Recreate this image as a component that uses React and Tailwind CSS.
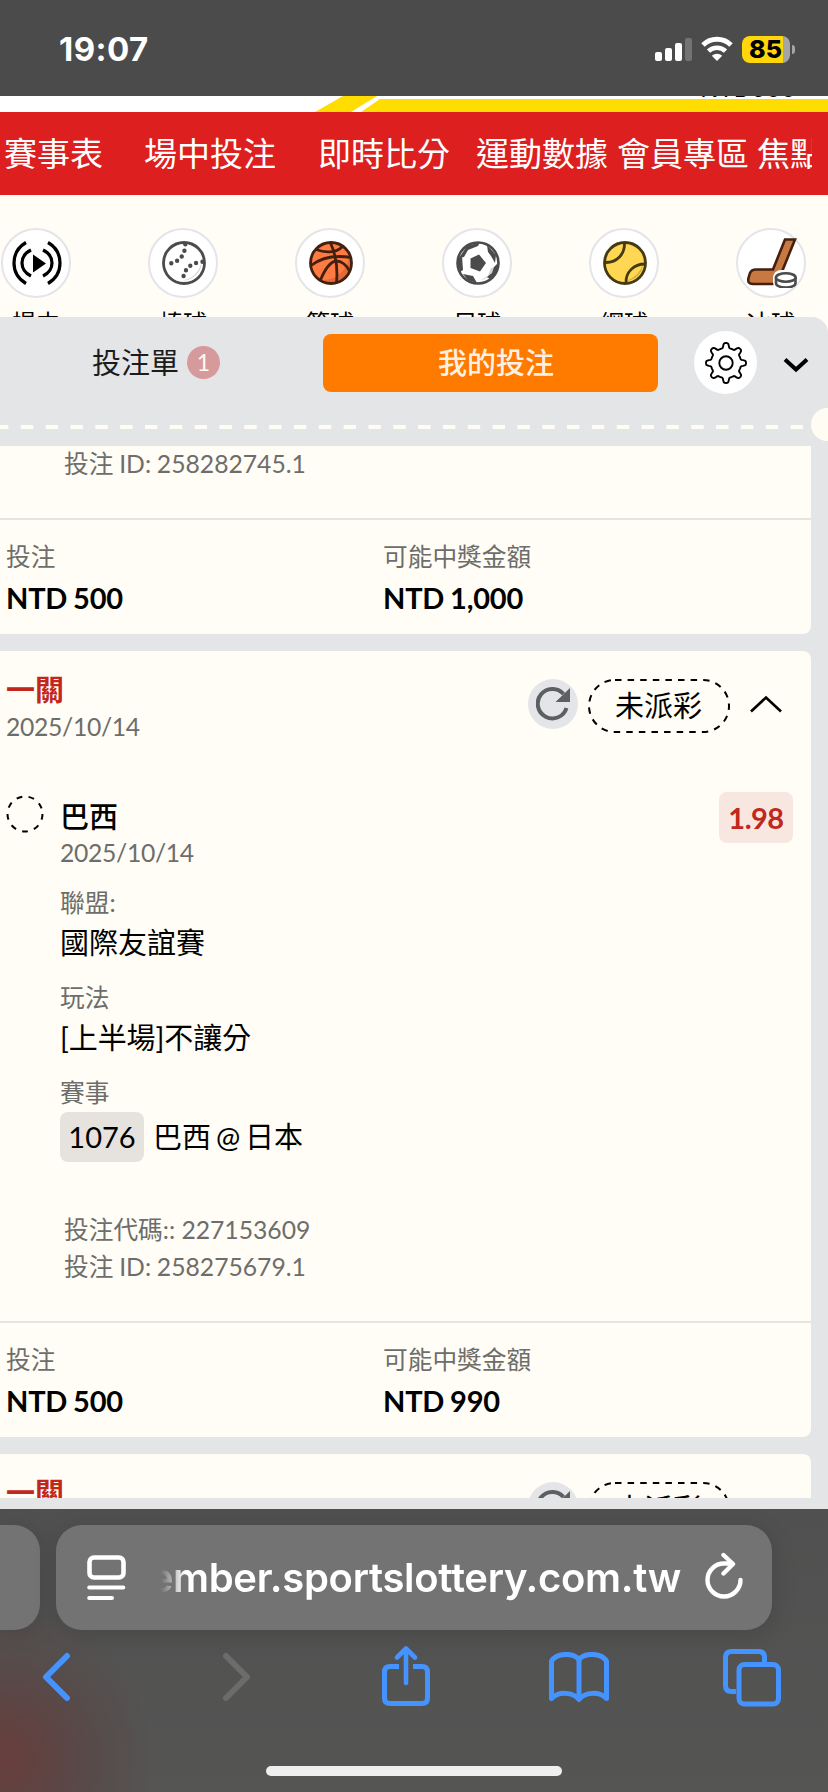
const navItems = [
  { label: "賽事表", space: "mr-[41px]" },
  { label: "場中投注", space: "mr-[42px]" },
  { label: "即時比分", space: "mr-[26px]" },
  { label: "運動數據", space: "mr-[9px]" },
  { label: "會員專區", space: "mr-[8px]" },
  { label: "焦點賽事", space: "" },
];

function StatusBar() {
  return (
    <div className="flex h-24 shrink-0 items-start justify-between bg-[#4b4b4b] pl-[59px] pr-[33px] font-['Inter',sans-serif]">
      <span className="mt-[29px] text-[33px] font-bold leading-[40px] tracking-[0.4px] text-white">
        19:07
      </span>
      <div className="mt-9 flex items-start">
        <svg width="38" height="24" viewBox="0 0 38 24" className="mt-[2px]" fill="#fff">
          <rect x="0" y="14" width="7" height="9" rx="2" />
          <rect x="10" y="10" width="7" height="13" rx="2" />
          <rect x="20" y="5" width="7" height="18" rx="2" />
          <rect x="30" y="0" width="7" height="23" rx="2" fill="#737373" />
        </svg>
        <svg width="32" height="25" viewBox="0 0 32 25" className="ml-[8px]" fill="none">
          <path d="M2 9a20 20 0 0 1 28 0" stroke="#fff" strokeWidth="5" />
          <path d="M7.5 15.2a12.3 12.3 0 0 1 17 0" stroke="#fff" strokeWidth="4.6" />
          <path d="M16 25l-5.2-5.2a7.4 7.4 0 0 1 10.4 0z" fill="#fff" />
        </svg>
        <div className="ml-[9px] flex h-[27px] w-12 items-center justify-center rounded-[8px] bg-[linear-gradient(90deg,#ffd60a_41px,#a5a5a5_41px)] pr-[1px] text-[25px] font-extrabold leading-none text-black">
          85
        </div>
        <div className="ml-[2px] mt-[9px] h-[9px] w-[3px] rounded-r-full bg-[#a5a5a5]" />
      </div>
    </div>
  );
}

function SiteHeader() {
  return (
    <div className="relative h-4 shrink-0 overflow-hidden bg-white">
      <svg width="828" height="16" viewBox="0 0 828 16" fill="#ffdd00">
        <path d="M315 16L343 0H377L351 16z" />
        <path d="M361 16L380 3H828V16z" />
      </svg>
      <span className="absolute right-[32px] top-[-21px] text-[24px] leading-[28px] text-black font-['Inter',sans-serif]">
        NTD500
      </span>
    </div>
  );
}

function LiveIcon() {
  return (
    <svg width="50" height="44" viewBox="0 0 50 44" fill="none" stroke="#000" strokeWidth="3.2">
      <path d="M14 1.5C-2 11 -2 33 14 42.5" />
      <path d="M19 9C7 15 7 29 19 35" />
      <path d="M31 9C43 15 43 29 31 35" />
      <path d="M36 1.5C52 11 52 33 36 42.5" />
      <path d="M21 13.5V31.5L34 22.5z" fill="#000" stroke="none" />
    </svg>
  );
}

function BaseballIcon() {
  return (
    <svg width="44" height="44" viewBox="0 0 44 44" fill="none">
      <circle cx="22" cy="22" r="20.5" fill="#fff" />
      <path d="M39.5 20A22 22 0 0 1 20 39.5A18.5 18.5 0 0 0 39.5 20z" fill="#d4d4d4" />
      <circle cx="22" cy="22" r="20.5" stroke="#4b4b4b" strokeWidth="2.8" />
      <g stroke="#4b4b4b" strokeWidth="4.4" strokeLinecap="round">
        <path d="M23.3 3.3C23 16 16 22 3.3 23.3" strokeDasharray="0 6.4" />
        <path d="M40.5 20.8C28 22 21.5 28 20.8 40.5" strokeDasharray="0 6.4" />
      </g>
    </svg>
  );
}

function BasketballIcon() {
  return (
    <svg width="44" height="44" viewBox="0 0 44 44" fill="none" stroke="#43200f" strokeWidth="2.8">
      <circle cx="22" cy="22" r="20.5" fill="#ff7b42" stroke="none" />
      <path d="M40 15A26 26 0 0 1 14 39A18 18 0 0 0 40 15z" fill="#e56a35" stroke="none" />
      <circle cx="22" cy="22" r="20.5" />
      <path d="M21.5 2C27 14 29 27 27.5 42" />
      <path d="M7 8.5C16 12 27 12 33 6" />
      <path d="M2 24.5C13 16 27 14 42 16.5" />
      <path d="M11.5 39C16 28 21 21 27 20C33 20 38 25 40.5 30" />
    </svg>
  );
}

function SoccerIcon() {
  return (
    <svg width="44" height="44" viewBox="0 0 44 44" fill="none">
      <circle cx="22" cy="22" r="20.5" fill="#fff" stroke="#4b4b4b" strokeWidth="2.6" />
      <path d="M25 39C32 38 37 33 39 26L35 27L32 35z" fill="#d4d4d4" />
      <path d="M14.5 17.5L23 13.5L30 22L24 30.5L14.5 27z" fill="#4b4b4b" />
      <path d="M11 5L24 1L22 5L12 9L8 16L3 17zM31 4L40 14L39 22L35 15L32 11zM1 18L6 15L7 29L4 31zM7 33L17 35L21 42L12 39zM42 22L41 31L34 38L31 36L36 32L38 26z" fill="#4b4b4b" />
    </svg>
  );
}

function TennisIcon() {
  return (
    <svg width="44" height="44" viewBox="0 0 44 44" fill="none" stroke="#453a12" strokeWidth="2.8">
      <circle cx="22" cy="22" r="20.5" fill="#ffd752" stroke="none" />
      <path d="M40 23A25 25 0 0 1 22 40A18 18 0 0 0 40 23z" fill="#cdab3c" stroke="none" />
      <circle cx="22" cy="22" r="20.5" />
      <path d="M21.5 2C22 13 14 22 2 21.5" />
      <path d="M42 23C31 23 22.5 31 23 42" />
    </svg>
  );
}

function HockeyIcon() {
  return (
    <svg width="50" height="50" viewBox="0 0 50 50" fill="none" strokeWidth="2.6">
      <path
        d="M38 1.500H48L32 41Q30 46 25 46H6Q0 46 1.500 40L3 35Q4.500 31.500 9 31.500H26z"
        fill="#c87941"
        stroke="#43200f"
      />
      <rect x="26" y="32" width="23" height="20" rx="8" fill="#fff" />
      <path d="M29 39V45C29 51 48.5 51 48.5 45V39" stroke="#4b4b4b" fill="#fff" />
      <ellipse cx="38.8" cy="39.5" rx="9.8" ry="4.2" stroke="#4b4b4b" fill="#fff" />
    </svg>
  );
}

const sports = [
  { label: "場中", icon: <LiveIcon /> },
  { label: "棒球", icon: <BaseballIcon /> },
  { label: "籃球", icon: <BasketballIcon /> },
  { label: "足球", icon: <SoccerIcon /> },
  { label: "網球", icon: <TennisIcon /> },
  { label: "冰球", icon: <HockeyIcon /> },
];

function SportsRow() {
  return (
    <div className="flex h-[122px] shrink-0 gap-[77px] overflow-hidden pl-[1px] pt-[33px]">
      {sports.map((sport) => (
        <div key={sport.label} className="flex w-[70px] shrink-0 flex-col items-center">
          <div className="flex h-[70px] w-[70px] shrink-0 items-center justify-center rounded-full border-2 border-[#e4e5e9] bg-white pl-[2px]">
            {sport.icon}
          </div>
          <span className="mt-[7px] whitespace-nowrap text-[24px] leading-[36px] text-black">
            {sport.label}
          </span>
        </div>
      ))}
    </div>
  );
}

function GearIcon() {
  // eight rounded teeth around the hub
  const points = [];
  for (let i = 0; i < 192; i++) {
    const angle = (i / 192) * Math.PI * 2;
    const wave = Math.cos(angle * 8);
    const r = 17.6 + 2.5 * Math.tanh((wave - 0.3) * 2.6);
    points.push(`${(21 + r * Math.cos(angle)).toFixed(2)},${(21 + r * Math.sin(angle)).toFixed(2)}`);
  }
  return (
    <svg width="42" height="42" viewBox="0 0 42 42" fill="none" stroke="#000" strokeWidth="1.9">
      <polygon points={points.join(" ")} strokeLinejoin="round" />
      <circle cx="21" cy="21" r="6.7" />
    </svg>
  );
}

function BetTabs() {
  return (
    <div className="flex h-[91px] items-center">
      <div className="flex w-[323px] items-center pl-[92px]">
        <span className="text-[29px] leading-[36px] text-[#1c1c1c]">投注單</span>
        <span className="ml-[8px] flex h-[33px] w-[33px] items-center justify-center rounded-full bg-[#d69a9d] text-[23px] leading-none text-[#fffaf0]">
          1
        </span>
      </div>
      <button className="h-[58px] w-[335px] rounded-[8px] bg-[#ff7b00] pl-[11px] text-[29px] font-medium leading-[36px] text-[#fff0e4]">
        我的投注
      </button>
      <div className="ml-[36px] flex h-[63px] w-[63px] items-center justify-center rounded-full bg-white pl-[1px]">
        <GearIcon />
      </div>
      <svg width="26" height="16" viewBox="0 0 26 16" className="ml-[26px] mt-[4px]" fill="none">
        <path d="M2 2.5L13 12.5L24 2.5" stroke="#000" strokeWidth="4" />
      </svg>
    </div>
  );
}

function TicketEdge() {
  return (
    <div className="relative h-[38px] overflow-hidden">
      <svg width="808" height="4" viewBox="0 0 808 4" className="mt-[17px]">
        <path d="M-4 2H808" stroke="#fffdf3" strokeWidth="4" strokeDasharray="12.4 12.43" />
      </svg>
      <div className="absolute right-[-17px] top-0 h-[33px] w-[34px] rounded-full bg-[#fffdf3]" />
    </div>
  );
}

function ResendIcon() {
  return (
    <div className="flex h-[50px] w-[50px] items-center justify-center rounded-full bg-[#e4e5e9]">
      <svg width="34" height="34" viewBox="0 0 34 34" fill="none">
        <path d="M30.5 21A14.7 14.7 0 1 1 27.5 7" stroke="#5e5f61" strokeWidth="4" />
        <path d="M34 1V15H19.5z" fill="#5e5f61" />
      </svg>
    </div>
  );
}

function TicketHeader() {
  return (
    <div className="flex shrink-0 justify-between">
      <div className="flex flex-col pl-[6px] pt-[21px]">
        <span className="mb-[1px] text-[29px] font-bold leading-[36px] text-[#c1271b]">一關</span>
        <span className="text-[24.7px] leading-[36px] tracking-[-0.3px] text-[#6d6d6b]">2025/10/14</span>
      </div>
      <div className="flex items-start pr-[28px] pt-[28px]">
        <ResendIcon />
        <div className="relative ml-[10px] flex h-[54px] w-[142px] items-center justify-center pr-[1px] text-[29px] leading-[36px] text-black">
          <svg width="142" height="54" viewBox="0 0 142 54" className="absolute inset-0" fill="none">
            <rect
              x="1"
              y="1"
              width="140"
              height="52"
              rx="26"
              stroke="#000"
              strokeWidth="2"
              strokeDasharray="6.5 6.1"
            />
          </svg>
          未派彩
        </div>
        <svg width="34" height="18" viewBox="0 0 34 18" className="ml-[19px] mt-[16px]" fill="none">
          <path d="M2 16.5L17 2.5L32 16.5" stroke="#000" strokeWidth="2.6" />
        </svg>
      </div>
    </div>
  );
}

function TicketFooter({ stake, payout }) {
  return (
    <div className="grid grid-cols-[377px_1fr] border-t-2 border-[#e7e3de] pb-[11px] pl-[6px] pt-[19px]">
      <span className="text-[24.7px] leading-[36px] text-[#6d6d6b]">投注</span>
      <span className="text-[24.7px] leading-[36px] text-[#6d6d6b]">可能中獎金額</span>
      <span className="text-[29px] font-bold leading-[46px] tracking-[-0.2px] text-black [word-spacing:-1px]">{stake}</span>
      <span className="text-[29px] font-bold leading-[46px] tracking-[-0.2px] text-black [word-spacing:-1px]">{payout}</span>
    </div>
  );
}

function Field({ label, children }) {
  return (
    <div className="flex flex-col">
      <span className="text-[24.7px] leading-[36px] text-[#6d6d6b]">{label}</span>
      {children}
    </div>
  );
}

function Selection() {
  return (
    <div className="flex pt-[54px]">
      <svg width="38" height="38" viewBox="0 0 38 38" className="ml-[6px] mt-[-4px] shrink-0" fill="none">
        <circle cx="19" cy="19" r="17.5" stroke="#000" strokeWidth="2" strokeDasharray="5.8 6.42" />
      </svg>
      <div className="ml-[16px] flex flex-1 flex-col">
        <span className="text-[29px] font-medium leading-[36px] text-black">巴西</span>
        <span className="text-[24.7px] leading-[36px] tracking-[-0.3px] text-[#6d6d6b]">2025/10/14</span>
        <div className="mt-[14px] flex flex-col gap-[15px]">
          <Field label="聯盟:">
            <span className="text-[29px] leading-[44px] text-black">國際友誼賽</span>
          </Field>
          <Field label="玩法">
            <span className="text-[29px] leading-[44px] tracking-[-0.1px] text-black">[上半場]不讓分</span>
          </Field>
          <Field label="賽事">
            <div className="mt-[1px] flex items-center text-[29px] leading-[50px] text-black">
              <span className="h-[50px] w-[84px] rounded-[8px] bg-[#e6e3de] text-center">1076</span>
              <span className="ml-[9px] [word-spacing:-2.5px]">巴西 @ 日本</span>
            </div>
          </Field>
        </div>
        <div className="mb-[36px] mt-[49px] flex flex-col pl-[4px] text-[24.7px] leading-[37px] text-[#6d6d6b]">
          <span>投注代碼:: 227153609</span>
          <span className="[word-spacing:-0.5px]">投注 ID: 258275679.1</span>
        </div>
      </div>
      <span className="mr-[18px] mt-[-7px] flex h-[51px] w-[74px] items-center justify-center rounded-[8px] bg-[#f8e6e0] text-[29px] font-bold tracking-[-0.5px] text-[#c1271b]">
        1.98
      </span>
    </div>
  );
}

function BetPanel() {
  return (
    <div className="flex h-[1192px] shrink-0 flex-col rounded-tr-[16px] bg-[#e4e5e7]">
      <BetTabs />
      <TicketEdge />
      <div className="flex h-[1052px] w-[811px] flex-col gap-[17px] overflow-hidden">
        <div className="h-[188px] shrink-0 rounded-br-[8px] bg-[#fffdf5]">
          <div className="h-[72px] pl-[64px] text-[24.7px] leading-[36px] text-[#6d6d6b] [word-spacing:-0.5px]">
            投注 ID: 258282745.1
          </div>
          <TicketFooter stake="NTD 500" payout="NTD 1,000" />
        </div>
        <div className="h-[786px] shrink-0 rounded-r-[8px] bg-[#fffdf5]">
          <TicketHeader />
          <Selection />
          <TicketFooter stake="NTD 500" payout="NTD 990" />
        </div>
        <div className="h-[120px] shrink-0 rounded-r-[8px] bg-[#fffdf5]">
          <TicketHeader />
        </div>
      </div>
    </div>
  );
}

function AddressBar() {
  return (
    <div className="flex h-[105px]">
      <div className="w-10 rounded-r-[26px] bg-[#737373] shadow-[0_4px_24px_rgba(0,0,0,0.14)]" />
      <div className="ml-4 flex w-[716px] items-center rounded-[26px] bg-[#737373] pl-[31px] shadow-[0_4px_24px_rgba(0,0,0,0.14)]">
        <svg width="40" height="46" viewBox="0 0 40 46" fill="none" stroke="#fff" strokeLinecap="round">
          <rect x="2.5" y="2.5" width="34" height="20" rx="4.5" strokeWidth="4.6" />
          <path d="M2.2 32.5H36.3M2.2 43H25" strokeWidth="4" />
        </svg>
        <div className="ml-[34px] flex w-[520px] justify-end overflow-hidden whitespace-nowrap text-[40px] font-semibold leading-[50px] tracking-[-0.3px] text-white font-['Inter',sans-serif] [mask-image:linear-gradient(90deg,transparent,#000_24px)]">
          member.sportslottery.com.tw
        </div>
        <svg width="40" height="48" viewBox="0 0 40 48" className="ml-[23px] mt-[-4px]" fill="none" stroke="#fff" strokeWidth="4.4" strokeLinecap="round" strokeLinejoin="round">
          <path d="M36.5 28A16.5 16.5 0 1 1 20 11.5H28" />
          <path d="M19.5 3L29 12L19.5 21.5" />
        </svg>
      </div>
    </div>
  );
}

function Toolbar() {
  return (
    <div className="mt-[14px] flex h-[64px] items-start pl-[41px] text-[#4593ff]">
      <svg width="32" height="50" viewBox="0 0 32 50" className="mt-[8px]" fill="none">
        <path d="M26 4L5 25L26 46" stroke="currentColor" strokeWidth="6" strokeLinecap="round" strokeLinejoin="round" />
      </svg>
      <svg width="32" height="50" viewBox="0 0 32 50" className="ml-[147px] mt-[8px] text-[#6c6c6b]" fill="none">
        <path d="M6 4L27 25L6 46" stroke="currentColor" strokeWidth="6" strokeLinecap="round" strokeLinejoin="round" />
      </svg>
      <svg width="48" height="62" viewBox="0 0 48 62" className="ml-[130px] mt-[1px]" fill="none" stroke="currentColor" strokeWidth="5">
        <path d="M17 21.5H8Q2.5 21.5 2.5 27V53Q2.5 58.5 8 58.5H40Q45.5 58.5 45.5 53V27Q45.5 21.5 40 21.5H31" />
        <path d="M24 38V4M15 12.5L24 3.5L33 12.5" strokeWidth="4.6" strokeLinecap="round" strokeLinejoin="round" />
      </svg>
      <svg width="60" height="52" viewBox="0 0 60 52" className="ml-[119px] mt-[8px]" fill="none" stroke="currentColor" strokeWidth="5" strokeLinejoin="round">
        <path d="M30 47.5C24 40 10 39 2.5 46.5V9C8 0.5 24 0.5 30 7.5C36 0.5 52 0.5 57.5 9V46.5C50 39 36 40 30 47.5z" />
        <path d="M30 7.5V47" />
      </svg>
      <svg width="58" height="58" viewBox="0 0 58 58" className="ml-[114px] mt-[5px]" fill="none" stroke="currentColor" strokeWidth="5">
        <path d="M13 42.5H8.5Q2.5 42.5 2.5 36.5V8.5Q2.5 2.5 8.5 2.5H35.5Q41.5 2.5 41.5 8.5V13" />
        <rect x="16" y="15.5" width="39.5" height="39.5" rx="5.5" />
      </svg>
    </div>
  );
}

function BrowserChrome() {
  return (
    <div className="flex h-[283px] shrink-0 flex-col overflow-hidden bg-[radial-gradient(circle_at_0px_250px,#683f3d_0px,#62413f_30px,#564c4b_100px,transparent_155px),linear-gradient(180deg,#505050,#555554)] pt-4">
      <AddressBar />
      <Toolbar />
      <div className="ml-[266px] mt-[58px] h-[10px] w-[296px] rounded-full bg-[#efefef]" />
    </div>
  );
}

export default function App() {
  return (
    <div
      lang="zh-Hant"
      className="flex h-[1792px] w-[828px] flex-col overflow-hidden bg-[#fffdf5] font-['Lato','Noto_Sans_CJK_TC',sans-serif]"
    >
      <StatusBar />
      <SiteHeader />
      <nav className="flex h-[83px] shrink-0 items-center bg-[#dd1f1f] pb-[2px] pr-[16px]">
        <div className="flex w-[812px] overflow-hidden whitespace-nowrap pl-[4px] text-[33px] leading-[48px] text-white">
          {navItems.map((item) => (
            <span key={item.label} className={item.space}>
              {item.label}
            </span>
          ))}
        </div>
      </nav>
      <SportsRow />
      <BetPanel />
      <BrowserChrome />
    </div>
  );
}
